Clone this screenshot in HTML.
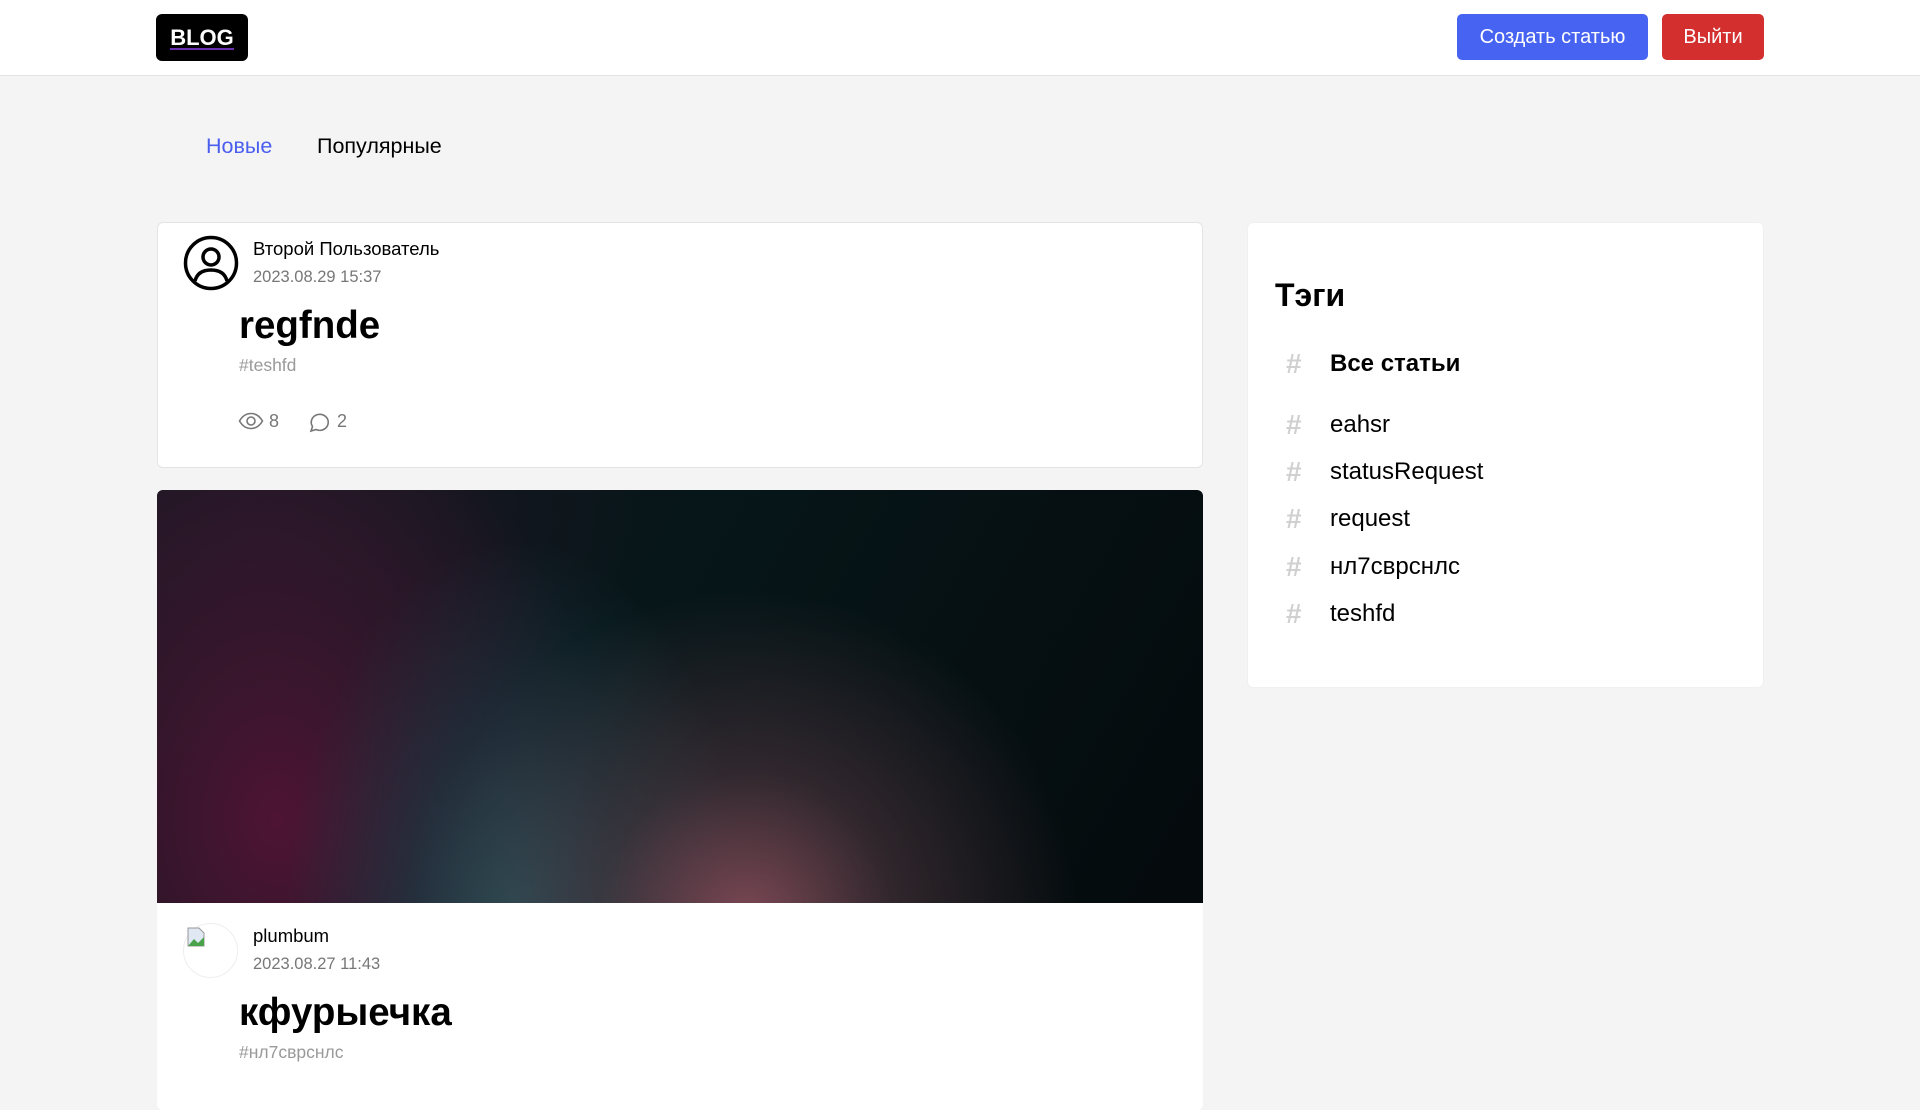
<!DOCTYPE html>
<html><head><meta charset="utf-8"><style>
*{margin:0;padding:0;box-sizing:border-box}
body{width:1920px;height:1080px;overflow:hidden;background:#f4f4f4;font-family:"Liberation Sans",Arial,sans-serif;position:relative;color:#000}
.abs{position:absolute;white-space:nowrap}
.hdr{position:absolute;left:0;top:0;width:1920px;height:76px;background:#fff;border-bottom:1px solid #e2e2e2}
.logo{left:156px;top:14px;width:92px;height:47px;background:#000;border-radius:6px;color:#fff;font-weight:bold;font-size:22px;line-height:47px;text-align:center}
.logo span{border-bottom:2px solid #6a2fb0;line-height:20px;display:inline-block}
.btn{top:14px;height:46px;border-radius:5px;color:#fff;font-size:20px;line-height:46px;text-align:center}
.card{position:absolute;background:#fff;border:1px solid #e4e4e4;border-radius:6px}
.name{font-size:18.5px;line-height:22px}
.date{font-size:16.5px;color:#777;line-height:20px}
.title{font-size:38.5px;font-weight:bold;line-height:44px}
.tag{font-size:17.5px;color:#999;line-height:20px}
.side .t{font-size:24px;line-height:30px}
.hash{font-size:28px;color:#d0d0d0;line-height:30px;font-weight:bold}
</style></head><body>
<div class="hdr"></div>
<div class="abs logo"><span>BLOG</span></div>
<div class="abs btn" style="left:1457px;width:191px;background:#4763f1">Создать статью</div>
<div class="abs btn" style="left:1662px;width:102px;background:#d32f2f">Выйти</div>

<div class="abs" style="left:206px;top:133px;font-size:21.5px;color:#4a5ef0;line-height:26px">Новые</div>
<div class="abs" style="left:317px;top:133px;font-size:21.5px;line-height:26px">Популярные</div>

<div class="card" style="left:157px;top:222px;width:1046px;height:246px"></div>
<svg class="abs" style="left:183px;top:235px" width="56" height="56" viewBox="0 0 56 56" fill="none" stroke="#000" stroke-width="3.5"><circle cx="28" cy="28" r="25.5"/><circle cx="28" cy="22" r="8"/><path d="M12 46c2-8 8-11 16-11s14 3 16 11"/></svg>
<div class="abs name" style="left:253px;top:238px">Второй Пользователь</div>
<div class="abs date" style="left:253px;top:267px">2023.08.29 15:37</div>
<div class="abs title" style="left:239px;top:304px">regfnde</div>
<div class="abs tag" style="left:239px;top:355px">#teshfd</div>
<svg class="abs" style="left:238px;top:412px" width="26" height="18" viewBox="0 0 26 18" fill="none" stroke="#777" stroke-width="1.6"><path d="M1.5 9C5 3 9 1.5 13 1.5S21 3 24.5 9C21 15 17 16.5 13 16.5S5 15 1.5 9z"/><circle cx="13" cy="9" r="4"/></svg>
<div class="abs" style="left:269px;top:410px;font-size:18px;color:#777;line-height:22px">8</div>
<svg class="abs" style="left:308px;top:411px" width="22" height="22" viewBox="0 0 22 22" fill="none" stroke="#777" stroke-width="1.6"><path d="M3 20l1.5-4.5A8.5 8 0 1 1 8 18.5z"/></svg>
<div class="abs" style="left:337px;top:410px;font-size:18px;color:#777;line-height:22px">2</div>

<div class="card" style="left:157px;top:490px;width:1046px;height:620px;overflow:hidden;border:none">
<div style="position:absolute;left:0;top:0;width:1046px;height:413px;background:
radial-gradient(ellipse 330px 330px at 590px 430px,rgba(130,75,88,.95),rgba(90,60,70,.5) 45%,transparent 100%),
radial-gradient(ellipse 230px 380px at 360px 430px,rgba(35,80,88,.95),rgba(30,65,75,.5) 50%,transparent 100%),
radial-gradient(ellipse 330px 430px at 120px 330px,rgba(78,20,52,1),rgba(70,22,50,.6) 45%,transparent 100%),
radial-gradient(ellipse 380px 260px at 100px 40px,rgba(35,25,40,.8),transparent 100%),
linear-gradient(120deg,#15141e 0%,#061619 45%,#050a0c 100%)"></div>
</div>
<div class="abs" style="left:183px;top:923px;width:55px;height:55px;border-radius:50%;border:1px solid #eee"></div>
<svg class="abs" style="left:186px;top:926px" width="20" height="22" viewBox="0 0 20 22"><path d="M2 2h11l5 5v13H2z" fill="#dfe8f3" stroke="#999"/><path d="M2 20l6-7 4 4 6-6v9z" fill="#4aa34a"/></svg>
<div class="abs name" style="left:253px;top:925px">plumbum</div>
<div class="abs date" style="left:253px;top:954px">2023.08.27 11:43</div>
<div class="abs title" style="left:239px;top:991px">кфурыечка</div>
<div class="abs tag" style="left:239px;top:1042px">#нл7сврснлс</div>

<div class="card side" style="left:1247px;top:222px;width:517px;height:466px;border-color:#f0f0f0"></div>
<div class="abs" style="left:1275px;top:276px;font-size:32px;font-weight:bold;line-height:38px">Тэги</div>
<div class="abs hash" style="left:1286px;top:349px">#</div>
<div class="abs side" style="left:1330px;top:349px"><span class="t" style="font-weight:bold">Все статьи</span></div>
<div class="abs hash" style="left:1286px;top:410px">#</div><div class="abs side" style="left:1330px;top:410px"><span class="t">eahsr</span></div>
<div class="abs hash" style="left:1286px;top:457px">#</div><div class="abs side" style="left:1330px;top:457px"><span class="t">statusRequest</span></div>
<div class="abs hash" style="left:1286px;top:504px">#</div><div class="abs side" style="left:1330px;top:504px"><span class="t">request</span></div>
<div class="abs hash" style="left:1286px;top:552px">#</div><div class="abs side" style="left:1330px;top:552px"><span class="t">нл7сврснлс</span></div>
<div class="abs hash" style="left:1286px;top:599px">#</div><div class="abs side" style="left:1330px;top:599px"><span class="t">teshfd</span></div>
</body></html>
